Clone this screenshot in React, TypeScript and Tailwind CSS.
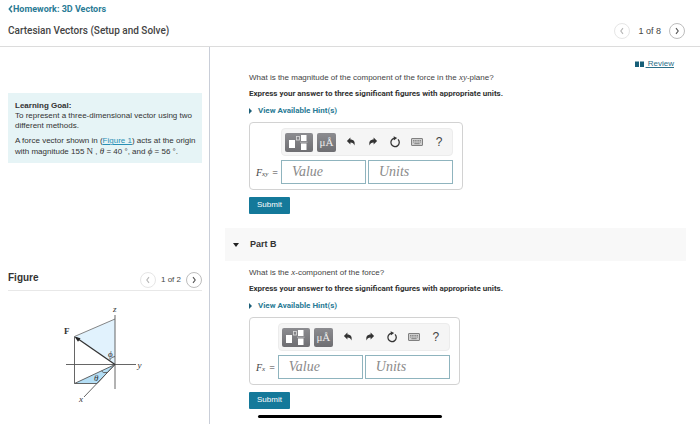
import React from 'react';

interface AnswerBoxProps {
  id: string;
  sub: string;
}

function PageArrow({ dir, disabled }: { dir: 'prev' | 'next'; disabled?: boolean }) {
  return (
    <button
      type="button"
      aria-label={dir === 'prev' ? 'Previous' : 'Next'}
      disabled={disabled}
      className="flex size-4 items-center justify-center rounded-full border border-[#bdbdbd] text-[#555] disabled:border-[#e6e6e6] disabled:text-[#b5b5b5]"
    >
      <svg viewBox="0 0 8 8" className="size-2" fill="none" stroke="currentColor" strokeWidth="1.1">
        <path d={dir === 'prev' ? 'M5 1.2 2.8 4 5 6.8' : 'M3 1.2 5.2 4 3 6.8'} />
      </svg>
    </button>
  );
}

function UndoIcon() {
  return (
    <svg viewBox="0 0 12 12" className="size-3" fill="currentColor">
      <path d="M5.400 1.500v1.900c3.100.1 5 1.800 4 6.100C8.800 7.400 7.700 6.400 5.400 6.400v2.200L1.900 5z" />
    </svg>
  );
}

function RedoIcon() {
  return (
    <svg viewBox="0 0 12 12" className="size-3" fill="currentColor">
      <path d="M6.600 1.500v1.900c-3.100.1-5 1.800-4 6.100.6-2.100 1.700-3.100 4-3.100v2.200L10.100 5z" />
    </svg>
  );
}

function ResetIcon() {
  return (
    <svg viewBox="0 0 12 12" className="size-3" fill="none" stroke="currentColor" strokeWidth="1.3">
      <path d="M9 3.400A4.200 4.200 0 1 1 5.200 2.300" />
      <path d="M4.600.2 8.200 2 5 4.300z" fill="currentColor" stroke="none" />
    </svg>
  );
}

function KeyboardIcon() {
  return (
    <svg viewBox="0 0 12 8" className="h-2 w-3">
      <rect x=".5" y=".5" width="11" height="7" rx=".4" fill="#cfcfcf" stroke="#808080" />
      <path d="M2 2.500h8M2 4h8" stroke="#777" strokeWidth=".8" strokeDasharray="1.2 .5" />
      <path d="M3.400 5.700h5.200" stroke="#777" strokeWidth=".9" />
    </svg>
  );
}

function TemplateIcon() {
  return (
    <svg viewBox="0 0 28 19" className="h-[19px] w-7">
      <rect x="4" y="7" width="6" height="8" fill="#fff" />
      <rect x="11.500" y="3.500" width="3" height="3.500" fill="none" stroke="#ddd" strokeWidth=".8" />
      <rect x="16" y="2" width="5.500" height="6" fill="#fff" />
      <path d="M15 9.200h7.500" stroke="#ccc" strokeWidth=".7" />
      <rect x="16" y="10.500" width="5.500" height="6.500" fill="#fff" />
    </svg>
  );
}

const tools = [
  { label: 'Undo', icon: <UndoIcon /> },
  { label: 'Redo', icon: <RedoIcon /> },
  { label: 'Reset', icon: <ResetIcon /> },
  { label: 'Keyboard shortcuts', icon: <KeyboardIcon /> },
];

function AnswerBox({ id, sub }: AnswerBoxProps) {
  return (
    <div className="flex w-fit gap-[3px] rounded-sm border border-[#d2d2d2] py-[5px] pr-[9px] pl-[6px]">
      <label
        htmlFor={`${id}-value`}
        className="flex h-6 items-center self-end font-['Liberation_Serif',serif] text-[10px]"
      >
        <i>F</i>
        <sub className="mr-1 text-[7px] italic">{sub}</sub>=
      </label>
      <div className="flex flex-col gap-1">
        <div className="flex h-7 items-center rounded-sm border border-[#ececec] bg-[#f5f5f5] pl-[3px]">
          <button
            type="button"
            aria-label="Templates"
            className="mr-1 rounded-xs bg-gradient-to-b from-[#8c8c90] to-[#6e6e72]"
          >
            <TemplateIcon />
          </button>
          <button
            type="button"
            aria-label="Symbols"
            className="mr-1 h-[19px] w-[19px] rounded-xs bg-gradient-to-b from-[#8c8c90] to-[#6e6e72] font-['Liberation_Serif',serif] text-[11px] leading-[19px] text-[#eee]"
          >
            μÅ
          </button>
          {tools.map((tool) => (
            <button
              key={tool.label}
              type="button"
              aria-label={tool.label}
              className="flex h-5 w-[22px] items-center justify-center text-[#333]"
            >
              {tool.icon}
            </button>
          ))}
          <button type="button" aria-label="Help" className="h-5 w-[22px] text-[12px] leading-5 text-[#444]">
            ?
          </button>
        </div>
        <div className="flex gap-[2px]">
          <input
            id={`${id}-value`}
            placeholder="Value"
            className="h-6 w-[85px] border border-[#8fb4be] bg-white pl-[10px] font-['Liberation_Serif',serif] text-[14px] italic outline-none placeholder:text-[#8a8a8a]"
          />
          <input
            aria-label="Units"
            placeholder="Units"
            className="h-6 w-[85px] border border-[#8fb4be] bg-white pl-[10px] font-['Liberation_Serif',serif] text-[14px] italic outline-none placeholder:text-[#8a8a8a]"
          />
        </div>
      </div>
    </div>
  );
}

function Question({ id, sub, children }: AnswerBoxProps & { children: React.ReactNode }) {
  return (
    <div className="pl-[39px]">
      <p className="text-[8px] leading-4">{children}</p>
      <p className="font-[Roboto,sans-serif] text-[8px] leading-4 font-bold text-[#333]">
        Express your answer to three significant figures with appropriate units.
      </p>
      <button
        type="button"
        className="mb-[3px] flex h-[17px] items-center gap-[6px] font-[Roboto,sans-serif] text-[8px] font-bold text-[#2a7b95]"
      >
        <svg viewBox="0 0 3 6" className="h-[6px] w-[3px]" fill="#1c5f78">
          <path d="M0 0 3 3 0 6z" />
        </svg>
        View Available Hint(s)
      </button>
      <AnswerBox id={id} sub={sub} />
      <button
        type="button"
        className="mt-[6px] h-[17px] rounded-[1px] bg-[#14799a] px-2 text-[8px] text-white"
      >
        Submit
      </button>
    </div>
  );
}

function VectorFigure() {
  return (
    <svg
      viewBox="60 300 90 105"
      className="mt-[10px] ml-[52px] h-[105px] w-[90px] font-['Liberation_Serif',serif]"
      fill="none"
      stroke="#555"
      strokeWidth=".9"
    >
      <path d="M115 318 74.500 335.500 115 363.500z" fill="#e1f2fd" stroke="none" />
      <path d="M115 363.500 74.500 382.500H97z" fill="#b4def5" />
      <path d="M74.500 335.500 115 318" stroke="#777" />
      <path d="M115 314v74M66 363.500h70M74.500 335.500v47" />
      <path d="M115 363.500 84 396" />
      <path d="M115 363.500 76 336.500" stroke="#333" strokeWidth="1.3" />
      <path d="M74.500 335.500 80.500 337.200 78 340.800z" fill="#222" stroke="none" />
      <path d="M109.500 359.200Q111.500 355.500 115 355.500" />
      <path d="M101.500 370Q103 372.500 107.500 371.500" />
      <g fill="#333" stroke="none" fontSize="9" fontStyle="italic">
        <text x="113" y="311">z</text>
        <text x="137.500" y="367">y</text>
        <text x="79" y="401">x</text>
        <text x="108" y="355.500">ϕ</text>
        <text x="94" y="380">θ</text>
        <text x="64" y="332.500" fontStyle="normal" fontWeight="bold">F</text>
      </g>
    </svg>
  );
}

export default function App() {
  return (
    <div className="flex min-h-screen flex-col bg-white font-['Liberation_Sans',Arial,sans-serif] text-[#444]">
      <header className="flex h-[47px] items-end justify-between border-b border-[#dcdcdc] pr-[15px] pb-[7px] pl-2">
        <div className="font-[Roboto,sans-serif]">
          <a href="#homework" className="flex items-center text-[9px] leading-4 font-bold text-[#2a7b95]">
            <svg viewBox="0 0 5 8" className="h-2 w-[5px]" fill="none" stroke="currentColor" strokeWidth="1.5">
              <path d="M4 .8 1.300 4 4 7.200" />
            </svg>
            Homework: 3D Vectors
          </a>
          <h1 className="mt-[6px] text-[10px] leading-4 font-medium">Cartesian Vectors (Setup and Solve)</h1>
        </div>
        <div className="flex items-center gap-2 text-[9px] leading-4">
          <PageArrow dir="prev" disabled />
          1 of 8
          <PageArrow dir="next" />
        </div>
      </header>

      <div className="flex flex-1">
        <aside className="flex w-[210px] shrink-0 flex-col border-r border-[#c9ced8] pr-[7px] pl-2">
          <section className="mt-[46px] bg-[#e6f4f6] pt-2 pb-[6px] pl-[7px] text-[8px] leading-[10px] text-[#333]">
            <h2 className="font-bold">Learning Goal:</h2>
            <p>
              To represent a three-dimensional vector using two
              <br />
              different methods.
            </p>
            <p className="mt-[5px]">
              A force vector shown in (
              <a href="#figure" className="text-[#2a8fb5] underline">
                Figure 1
              </a>
              ) acts at the origin
              <br />
              with magnitude 155 <span className="font-['Liberation_Serif',serif] text-[9px]">N</span> ,{' '}
              <i className="font-['Liberation_Serif',serif] text-[9px]">θ</i> = 40 °, and{' '}
              <i className="font-['Liberation_Serif',serif] text-[9px]">ϕ</i> = 56 °.
            </p>
          </section>
          <section id="figure" className="mt-[106px]">
            <div className="flex h-[22px] items-start justify-between border-b border-[#e8e8e8]">
              <h2 className="text-[10px] leading-[18px] font-bold text-[#333]">Figure</h2>
              <div className="flex items-center gap-[5px] self-end pb-[2px] text-[8px] leading-4">
                <PageArrow dir="prev" disabled />
                1 of 2
                <PageArrow dir="next" />
              </div>
            </div>
            <VectorFigure />
          </section>
        </aside>

        <main className="min-w-0 flex-1 pr-[14px]">
          <div className="flex justify-end pt-[9px] pr-3">
            <a href="#review" className="flex items-center gap-[2px] text-[8px] leading-4 text-[#2a6f88]">
              <svg viewBox="0 0 9 7" className="h-[7px] w-[9px]" fill="#175f78">
                <path d="M0 .5h4V6H0zM5 .5h4V6H5z" />
              </svg>
              <span className="whitespace-pre underline"> Review</span>
            </a>
          </div>
          <div className="-mt-[3px]">
            <Question id="part-a" sub="xy">
              What is the magnitude of the component of the force in the{' '}
              <i className="font-['Liberation_Serif',serif] text-[9px]">xy</i>-plane?
            </Question>
          </div>
          <div className="mt-[14px] mb-[3px] ml-[15px] bg-[#f8f8f8]">
            <button
              type="button"
              className="flex h-[33px] w-full items-center gap-[11px] px-2 text-[9px] font-bold text-[#333]"
            >
              <svg viewBox="0 0 6 4" className="h-1 w-[6px]" fill="#222">
                <path d="M0 0h6L3 4z" />
              </svg>
              Part B
            </button>
          </div>
          <Question id="part-b" sub="x">
            What is the <i className="font-['Liberation_Serif',serif] text-[9px]">x</i>-component of the force?
          </Question>
        </main>
      </div>

      {/* home indicator */}
      <div className="absolute bottom-[6px] left-1/2 h-[3px] w-[184px] -translate-x-1/2 rounded-full bg-black" />
    </div>
  );
}
